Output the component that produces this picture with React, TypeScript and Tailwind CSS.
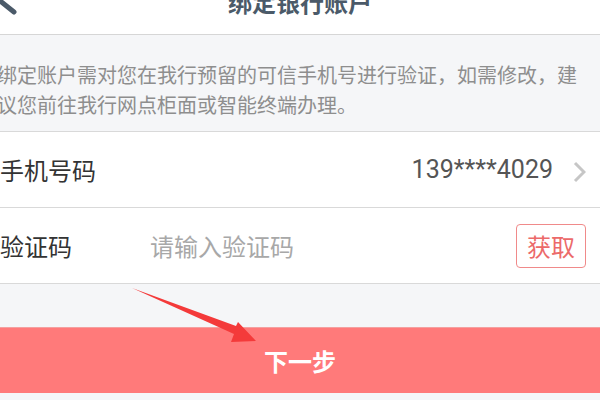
import React from "react";

const cjk = { fontFamily: '"Noto Sans CJK SC", "Noto Sans", sans-serif' };

function Row({ children }: { children: React.ReactNode }) {
  return (
    <div className="flex h-[76px] items-center border-b border-[#d9d9d9] bg-white pr-[14px]">
      {children}
    </div>
  );
}

export default function App() {
  return (
    <div className="relative h-[400px] w-[600px] overflow-hidden bg-[#f5f6f8]" style={cjk}>
      {/* header */}
      <div className="relative h-[35px] border-b border-[#d6d6d6] bg-white">
        <svg className="absolute left-0 top-0 z-10" width="24" height="20" viewBox="0 0 24 20">
          <path d="M-6 -4 L14 12" stroke="#4b5a69" strokeWidth="5" strokeLinecap="round" fill="none" />
        </svg>
        <div className="relative top-[-10px] text-center text-[24px] font-bold leading-[24px] text-[#4b5a69]">
          绑定银行账户
        </div>
      </div>

      {/* notice */}
      <div className="h-[96px] pr-3 pt-[25px] text-[20px] leading-[30px] text-[#8e8e8e]">
        <p className="ml-[-3px]">绑定账户需对您在我行预留的可信手机号进行验证，如需修改，建</p>
        <p className="ml-[-3px]">议您前往我行网点柜面或智能终端办理。</p>
      </div>

      {/* form */}
      <div className="border-t border-[#d9d9d9]">
        <Row>
          <span className="text-[24px] text-[#333]">手机号码</span>
          <span
            className="ml-auto text-[25px] text-[#555]"
            style={{ fontFamily: "Roboto, sans-serif" }}
          >
            139****4029
          </span>
          <svg className="ml-[20px] mt-[4px]" width="13" height="22" viewBox="0 0 13 22">
            <path d="M2 2 L11 11 L2 20" stroke="#c6c6c6" strokeWidth="3" fill="none" />
          </svg>
        </Row>
        <Row>
          <span className="w-[150px] text-[24px] text-[#333]">验证码</span>
          <span className="text-[24px] text-[#a8a8a8]">请输入验证码</span>
          <button className="ml-auto flex h-[44px] w-[70px] items-center justify-center rounded-[4px] border border-[#f08a8a] text-[24px] text-[#ec6a6a]">
            获取
          </button>
        </Row>
      </div>

      <div className="h-[43px]" />

      <button className="flex h-[66px] w-full items-center justify-center border-t border-[#f4a0a0] bg-[#ff7a7a] text-[24px] font-bold text-white">
        下一步
      </button>

      {/* annotation arrow */}
      <svg className="absolute left-0 top-0" width="600" height="400" viewBox="0 0 600 400">
        <polygon points="132,288 236,326 238,322 256,341 231,342 234,334" fill="#f43a3a" />
      </svg>
    </div>
  );
}
